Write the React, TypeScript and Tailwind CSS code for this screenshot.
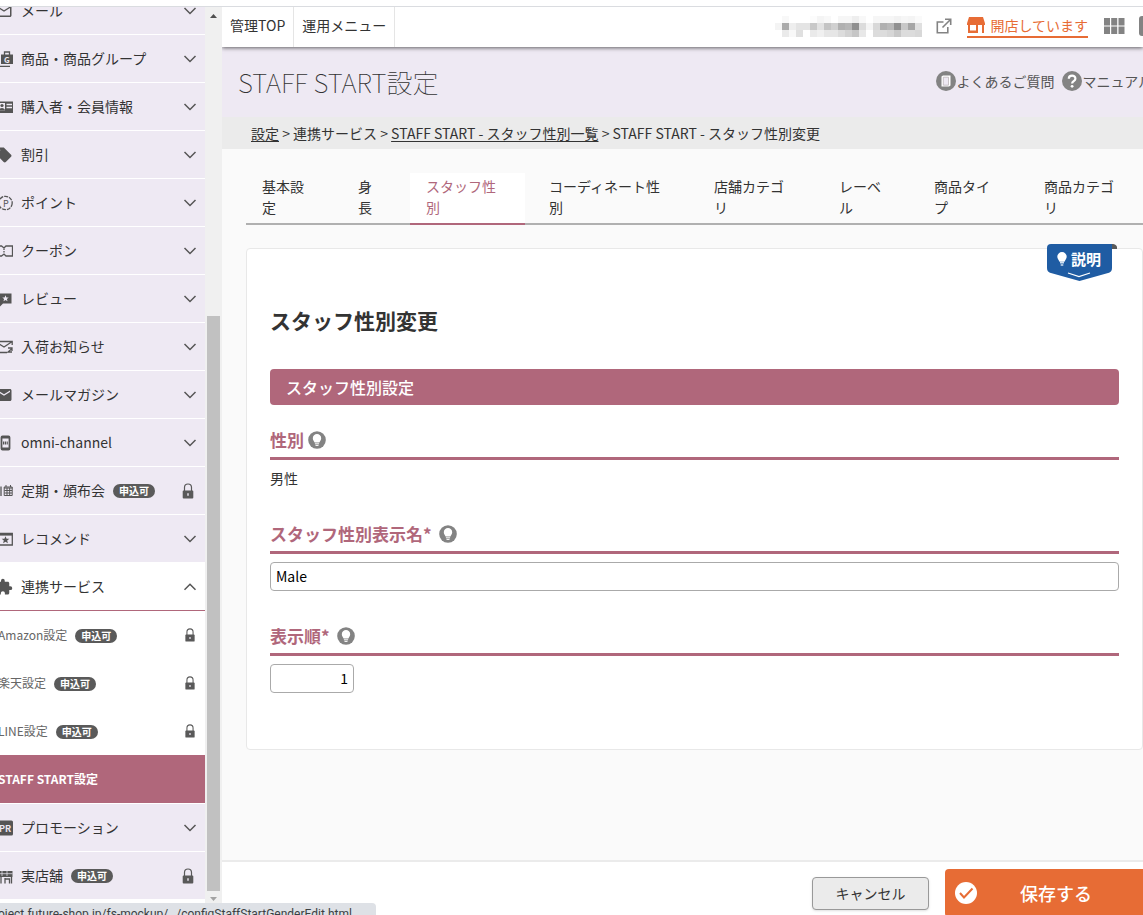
import React, { useState } from 'react';
import { MdEmail, MdExtension, MdLocalOffer, MdMailOutline } from 'react-icons/md';

type MenuItem = {
  label: string;
  icon: React.ReactNode;
  locked?: boolean;
};

const Icon = ({ children }: { children: React.ReactNode }) => (
  <svg className="w-[18px] h-[18px]" viewBox="0 0 18 18" fill="none" stroke="currentColor" strokeWidth={1.3}>
    {children}
  </svg>
);

const STAR = 'M0-3.2 .9-1h2.3L1.4.4 2 2.7 0 1.4-2 2.7-1.4.4-3.2-1H-.9z';

const BagIcon = () => (
  <Icon>
    <path d="M6 4.500h12v9.500H6z" fill="currentColor" stroke="none" />
    <path d="M9.500 5V2h5v3M2 6v10.300h13" />
    <text x="9" y="12.500" fontSize="8" fontWeight="700" fill="#eee9f3" stroke="none">G</text>
  </Icon>
);

const MemberIcon = () => (
  <Icon>
    <path d="M1 3.500h17v11.500H1z" fill="currentColor" stroke="none" />
    <path d="M3 5h7v7.500H3z" fill="#eee9f3" stroke="none" />
    <circle cx="7" cy="7.500" r="1.600" fill="currentColor" stroke="none" />
    <path d="M4 12.500c0-3.500 6-3.500 6 0z" fill="currentColor" stroke="none" />
    <path d="M11.500 6.500H17M11.500 9.500H17" stroke="#eee9f3" />
  </Icon>
);

const PointIcon = () => (
  <Icon>
    <circle cx="10.500" cy="9" r="6.700" strokeDasharray="4 1" />
    <text x="8" y="12.500" fontSize="9" fill="currentColor" stroke="none">P</text>
  </Icon>
);

const CouponIcon = () => (
  <Icon>
    <path d="M1 4h5.500L9 6l2-2h6.500v10H11l-2-2-2.500 2H1z" />
    <path d="M9 6.500v5" strokeDasharray="1.500 1" />
  </Icon>
);

const ReviewIcon = () => (
  <Icon>
    <path d="M1 3.500h15.500v10H8l-3 3v-3H1z" fill="currentColor" stroke="none" />
    <path d={STAR} transform="translate(10.5 8.5)" fill="#eee9f3" stroke="none" />
  </Icon>
);

const ArrivalIcon = () => (
  <Icon>
    <path d="M17.200 7V3.500H1v11h11M1.500 4.500 9 9l7.500-5" />
    <path d="M13 10h4v3M17 10.500l-4 3.500h4" />
  </Icon>
);

const OmniIcon = () => (
  <Icon>
    <rect x="6.500" y="2.500" width="8" height="13" rx="1" strokeWidth={1.800} />
    <path d="M7 3.500h7M7 14.500h7" strokeWidth={2} />
    <path d="M8 9h5" strokeWidth={3} strokeDasharray="1.200 .6" />
  </Icon>
);

const SubscriptionIcon = () => (
  <Icon>
    <path d="M6 4.500v9.500M3 4.500v9.500" />
    <path d="M9.200 5h8v8.500h-8zM9 6h8.500M11 3v2M15.500 3v2M9.500 8.500h7.500M9.500 11h7.500M12 6v7M14.700 6v7" strokeWidth={1} />
  </Icon>
);

const RecommendIcon = () => (
  <Icon>
    <path d="M1 3.500h16.300v11.500H1z" />
    <path d="M1 4.300h16.300" strokeWidth={2.600} />
    <path d={STAR} transform="translate(10.5 10) scale(1.2)" fill="currentColor" stroke="none" />
  </Icon>
);

const PromotionIcon = () => (
  <Icon>
    <rect x="1" y="1.500" width="17" height="15" rx="1.500" fill="currentColor" stroke="none" />
    <text x="4" y="12.500" fontSize="9" fontWeight="700" fill="#eee9f3" stroke="none">PR</text>
  </Icon>
);

const ShopIcon = () => (
  <Icon>
    <path d="M1 4h16.500v6H1z" fill="currentColor" stroke="none" />
    <path d="M1.500 6.700h16M7 4v5M12 4v5" stroke="#eee9f3" strokeWidth={0.700} />
    <path d="M6 10v6.500M10 11v5.500M10 12h4.500v4.500M16.500 10v6.500" />
  </Icon>
);

const Chevron = ({ up }: { up?: boolean }) => (
  <svg className="w-3.5 h-3.5 text-[#555]" viewBox="0 0 14 14" fill="none" stroke="currentColor" strokeWidth={1.500}>
    <path d={up ? 'M1.500 9.800 7 4.300l5.500 5.500' : 'M1.500 4 7 9.500 12.500 4'} />
  </svg>
);

const Lock = ({ small }: { small?: boolean }) => (
  <svg className={small ? 'w-3.5 h-3.5 text-[#595959]' : 'mr-px w-4 h-4 text-[#595959]'} viewBox="0 0 16 16" fill="none">
    <path d="M4.500 8V4.500a3.500 3.500 0 0 1 7 0V8" stroke="currentColor" strokeWidth={1.200} />
    <rect x="2.700" y="7.500" width="10.600" height="8" rx="1" fill="currentColor" />
    <path d="M8 10.300v2.400" stroke="#eee9f3" strokeWidth={1.400} />
  </svg>
);

const Tag = () => (
  <span className="ml-2 mt-px h-3.5 rounded-full bg-[#5a5a5a] px-1.5 text-[10px] leading-[14px] font-bold text-white">申込可</span>
);

const Bulb = () => (
  <svg className="w-[18px] h-[18px]" viewBox="0 0 18 18" role="img" aria-label="ヒント">
    <circle cx="9" cy="9" r="8.800" fill="#838383" />
    <path d="M9 3a4.200 4.200 0 0 0-4.200 4.200c0 1.800 1.200 2.600 1.800 4.300h4.800c.6-1.700 1.800-2.500 1.800-4.300A4.200 4.200 0 0 0 9 3z" fill="#fff" />
    <path d="M6.900 12.800h4.200M7.500 14.400h3" stroke="#fff" strokeWidth={1} />
  </svg>
);

const upperMenu: MenuItem[] = [
  { label: 'メール', icon: <MdMailOutline size={18} /> },
  { label: '商品・商品グループ', icon: <BagIcon /> },
  { label: '購入者・会員情報', icon: <MemberIcon /> },
  { label: '割引', icon: <MdLocalOffer size={18} /> },
  { label: 'ポイント', icon: <PointIcon /> },
  { label: 'クーポン', icon: <CouponIcon /> },
  { label: 'レビュー', icon: <ReviewIcon /> },
  { label: '入荷お知らせ', icon: <ArrivalIcon /> },
  { label: 'メールマガジン', icon: <MdEmail size={18} /> },
  { label: 'omni-channel', icon: <OmniIcon /> },
  { label: '定期・頒布会', icon: <SubscriptionIcon />, locked: true },
  { label: 'レコメンド', icon: <RecommendIcon /> },
];

const lowerMenu: MenuItem[] = [
  { label: 'プロモーション', icon: <PromotionIcon /> },
  { label: '実店舗', icon: <ShopIcon />, locked: true },
];

const services = ['Amazon設定', '楽天設定', 'LINE設定'];

const tabs = ['基本設定', '身長', 'スタッフ性別', 'コーディネート性別', '店舗カテゴリ', 'レーベル', '商品タイプ', '商品カテゴリ'];

// Column widths of the tab bar, in the same order as the tabs
const tabWidths = ['w-[88px]', 'w-[60px]', 'w-[115px]', 'w-[157px]', 'w-[117px]', 'w-[87px]', 'w-[102px]', 'w-[117px]'];

// Masked shop name: grey levels, one row per line
const mask = [
  [255, 248, 255, 255, 255, 252, 244, 248, 255, 246, 246, 238, 248, 255, 246, 246, 246, 242, 246, 244, 250],
  [244, 171, 238, 228, 228, 200, 226, 196, 208, 176, 182, 144, 220, 244, 216, 176, 184, 144, 200, 166, 224],
  [255, 234, 248, 224, 255, 234, 240, 230, 230, 220, 210, 198, 232, 255, 220, 220, 214, 200, 220, 220, 216],
];

const MenuRow = ({ item }: { item: MenuItem }) => (
  <li className="border-b border-white bg-[#eee9f3]">
    <button className="flex h-[47px] w-full items-center pr-2 text-left text-sm">
      <span className="-ml-[5px] mr-2 shrink-0 text-[#555]">{item.icon}</span>
      <span className="pb-px">{item.label}</span>
      {item.locked && <Tag />}
      <span className="ml-auto">{item.locked ? <Lock /> : <Chevron />}</span>
    </button>
  </li>
);

const Sidebar = () => (
  <nav className="w-[205px] shrink-0 overflow-hidden bg-white">
    <ul className="-mt-5">
      {upperMenu.map((item) => <MenuRow key={item.label} item={item} />)}
      <li>
        <button className="flex h-12 w-full items-center border-b border-[#b0677b] pr-2 text-left text-sm">
          <span className="-ml-[5px] mr-2 shrink-0 text-[#555]"><MdExtension size={18} /></span>
          <span className="pb-px">連携サービス</span>
          <span className="ml-auto"><Chevron up /></span>
        </button>
        <ul className="border-b border-white text-xs">
          {services.map((name) => (
            <li key={name}>
              <a href="#" className="flex h-12 items-center pr-2 text-[#666]">
                <span className="-ml-0.5">{name}</span>
                <Tag />
                <span className="ml-auto"><Lock small /></span>
              </a>
            </li>
          ))}
          <li>
            <a href="#" className="flex h-12 items-center bg-[#b0677b] font-bold text-white">
              <span className="-ml-0.5">STAFF START設定</span>
            </a>
          </li>
        </ul>
      </li>
      {lowerMenu.map((item) => <MenuRow key={item.label} item={item} />)}
    </ul>
  </nav>
);

const ScrollBar = () => (
  <div className="flex w-[17px] shrink-0 flex-col items-center bg-[#f0f0f0]">
    <svg className="h-[17px] w-[17px] shrink-0" viewBox="0 0 17 17"><path d="M5 11h7L8.500 7z" fill="#505050" /></svg>
    <div className="flex-[292]" />
    <div className="w-[13px] flex-[575] bg-[#c1c1c1]" />
    <svg className="h-6 w-[17px] shrink-0" viewBox="0 0 17 24"><path d="M5 6h7l-3.500 4z" fill="#a3a3a3" /></svg>
  </div>
);

const Header = () => (
  <header className="relative z-10 flex h-10 shrink-0 items-center bg-white pb-0.5 text-sm shadow-[0_1px_4px_rgba(0,0,0,0.6)]">
    <a href="#" className="-mb-0.5 flex h-10 items-center border-r border-[#e5e5e5] px-2 pb-1">管理TOP</a>
    <a href="#" className="-mb-0.5 flex h-10 items-center border-r border-[#e5e5e5] px-2 pb-1">運用メニュー</a>
    <div className="ml-auto -mr-4 flex items-center">
      <svg className="mr-3 h-[21px] w-[148px]" viewBox="0 0 148 21" shapeRendering="crispEdges">
        {mask.map((row, y) =>
          row.map((v, x) => <rect key={`${x}-${y}`} x={x * 7} y={y * 7} width="7" height="7" fill={`rgb(${v},${v},${v})`} />)
        )}
      </svg>
      <svg className="mr-3.5 h-[18px] w-[18px]" viewBox="0 0 18 18" fill="none" stroke="#838383" strokeWidth={1.600}>
        <path d="M8.500 5H2.300v10.700h10.500V10M10 2.300h5.700v5.700M15.500 2.500 7.500 10.500" />
      </svg>
      <a href="#" className="mr-4 flex h-6 items-center border-b-2 border-[#e76c35] text-[#e76c35]">
        <svg className="mr-[5px] h-4 w-[18px]" viewBox="0 0 18 16" fill="currentColor">
          <path d="M2 0h14l2 6.500V8H0V6.500z" />
          <path d="M1 7h10v9H1zm2 1v5.500h6V8z" fillRule="evenodd" />
          <path d="M15 7h2v9h-2z" />
        </svg>
        開店しています
      </a>
      <svg className="mr-3.5 h-4 w-[21px]" viewBox="0 0 21 16" fill="#838383">
        <path d="M0 0h6v7.500H0zM7.200 0h6v7.500h-6zM14.500 0h6v7.500h-6zM0 8.500h6V16H0zM7.200 8.500h6V16h-6zM14.500 8.500h6V16h-6z" />
      </svg>
      <svg className="h-5 w-5" viewBox="0 0 20 20" fill="#838383"><rect width="20" height="20" rx="3" /></svg>
    </div>
  </header>
);

const TitleBar = () => (
  <div className="flex h-[70px] shrink-0 items-center bg-[#eee9f3] pl-4">
    <h1 className="text-[26px] leading-8 font-thin">STAFF START設定</h1>
    <div className="ml-auto -mr-[9px] flex shrink-0 items-center gap-2 pb-0.5 text-sm text-[#555]">
      <a href="#" className="flex items-center">
        <svg className="h-5 w-5" viewBox="0 0 20 20">
          <circle cx="10" cy="10" r="10" fill="#838383" />
          <path d="M5.500 5.500 7 4.500h7.500v10l-1.500 1h-7.500z" fill="#fff" />
          <path d="M7.300 6.200h5.200v8H7.300z" fill="#eee9f3" stroke="#b5aeb0" strokeWidth={0.700} />
        </svg>
        よくあるご質問
      </a>
      <a href="#" className="flex items-center">
        <svg className="h-5 w-5" viewBox="0 0 20 20" fill="none">
          <circle cx="10" cy="10" r="10" fill="#838383" />
          <path d="M6.800 7.800C6.800 3.700 13.400 3.700 13.400 7.700c0 2.400-3.300 2.500-3.300 4.800" stroke="#fff" strokeWidth={2.200} />
          <circle cx="10.100" cy="15.300" r="1.400" fill="#fff" />
        </svg>
        マニュアル
      </a>
    </div>
  </div>
);

const fieldHead = 'flex items-center gap-1 border-b-3 border-[#b0677b] pb-1.5 text-[17px] leading-[22px] font-bold text-[#b0677b]';
const fieldInput = 'mt-2 block h-[29px] rounded-sm border border-[#aaa] bg-white px-[5px] pb-0.5 text-sm text-black';

const App: React.FC = () => {
  const [activeTab, setActiveTab] = useState(2);
  const [name, setName] = useState('Male');
  const [order, setOrder] = useState('1');

  return (
    <div className="relative flex h-screen flex-col overflow-hidden bg-white font-['Noto_Sans_CJK_JP',sans-serif] text-[#333]">
      <div className="h-[7px] shrink-0 border-b border-[#dadce0]" />
      <div className="flex min-h-0 flex-1">
        <Sidebar />
        <ScrollBar />

        <div className="flex min-w-0 flex-1 flex-col overflow-hidden bg-[#fafafa]">
          <Header />
          <TitleBar />
          <div className="h-8 shrink-0 bg-[#ebebeb] pl-[29px] text-sm leading-8 whitespace-nowrap">
            <a href="#" className="underline underline-offset-2">設定</a> &gt; 連携サービス &gt;{' '}
            <a href="#" className="underline underline-offset-2">STAFF START - スタッフ性別一覧</a> &gt; STAFF START - スタッフ性別変更
          </div>

          <main className="min-h-0 flex-1 overflow-hidden pt-6 pl-6">
            <div className="flex gap-2 border-b-2 border-[#b0b0b0]" role="tablist">
              {tabs.map((tab, i) => (
                <button
                  key={tab}
                  role="tab"
                  aria-selected={activeTab === i}
                  onClick={() => setActiveTab(i)}
                  className={`shrink-0 pt-[3px] pr-5 pb-[5px] pl-4 text-left text-sm leading-[21px] ${tabWidths[i]} ${
                    activeTab === i ? 'bg-white text-[#b0677b] shadow-[0_2px_0_#b0677b]' : ''
                  }`}
                >
                  {tab}
                </button>
              ))}
            </div>

            <section className="relative mt-[23px] rounded border border-[#e8e8e8] bg-white px-[23px] pt-14 pb-14">
              <button className="absolute -top-[5px] right-[25px] flex h-[37px] w-[70px] items-start">
                <svg className="absolute inset-0 h-full w-full" viewBox="0 0 70 37" fill="none">
                  <path d="M62 0h4a4 4 0 0 1 4 5h-8z" fill="#595959" />
                  <path d="M4 0h61v24c0 2.500-1 4-3 4.800L32.500 37 3 28.800C1 28 0 26.500 0 24V4a4 4 0 0 1 4-4z" fill="#1f5ca3" />
                  <path d="M21 29l11 3.500L43 29" stroke="#fff" strokeWidth={1.200} />
                  <path d="M15 8a4.700 4.700 0 0 0-4.700 4.700c0 2 1.500 3 2.200 5h5c.7-2 2.200-3 2.200-5A4.700 4.700 0 0 0 15 8z" fill="#fff" />
                  <path d="M13 18.800h4M13.700 21h2.600" stroke="#cfe0f2" strokeWidth={1.400} />
                </svg>
                <span className="relative pt-1 pl-6 text-[15px] leading-[22px] font-bold text-white">説明</span>
              </button>

              <h2 className="mb-[34px] text-[21px] leading-[30px] font-bold">スタッフ性別変更</h2>
              <h3 className="h-9 rounded-sm bg-[#b0677b] px-4 text-base leading-9 font-medium text-white">スタッフ性別設定</h3>

              <div className="mt-6">
                <h4 className={fieldHead}>性別<Bulb /></h4>
                <p className="mt-2 text-sm leading-[21px]">男性</p>
              </div>

              <div className="mt-[34px]">
                <label htmlFor="genderName" className={fieldHead}>スタッフ性別表示名*&nbsp;<Bulb /></label>
                <input
                  id="genderName"
                  type="text"
                  value={name}
                  onChange={(e) => setName(e.target.value)}
                  className={`${fieldInput} w-full`}
                />
              </div>

              <div className="mt-[34px]">
                <label htmlFor="sortOrder" className={fieldHead}>表示順*&nbsp;<Bulb /></label>
                <input
                  id="sortOrder"
                  type="text"
                  value={order}
                  onChange={(e) => setOrder(e.target.value)}
                  className={`${fieldInput} w-21 text-right`}
                />
              </div>
            </section>
          </main>

          <footer className="flex h-[55px] shrink-0 items-start justify-end gap-4 overflow-hidden border-t-2 border-[#ebebeb] bg-white">
            <button className="mt-[15px] h-[33px] w-[117px] rounded-sm border border-[#999] bg-[#ebebeb] pb-0.5 text-sm shadow-sm">キャンセル</button>
            <button className="mt-[7px] -mr-[22px] flex h-12 w-[220px] items-center rounded bg-[#e76c35] px-2.5 text-white">
              <svg className="h-[22px] w-[22px]" viewBox="0 0 22 22" fill="none">
                <circle cx="11" cy="11" r="11" fill="#fff" />
                <path d="M5 11l4 4.500 8.500-9" stroke="#e76c35" strokeWidth={2} />
              </svg>
              <span className="flex-1 pr-5 text-center text-lg font-medium">保存する</span>
            </button>
          </footer>
        </div>
      </div>

      {/* Link status overlay */}
      <div className="absolute bottom-0 left-0 h-3 w-94 overflow-hidden rounded-tr bg-[#dee1e6] pt-0.5 font-[Roboto,sans-serif] text-xs leading-[18px] whitespace-nowrap text-[#3c4043]">
        <span className="-ml-0.5">oject.future-shop.jp/fs-mockup/…/configStaffStartGenderEdit.html</span>
      </div>
    </div>
  );
};

export default App;
